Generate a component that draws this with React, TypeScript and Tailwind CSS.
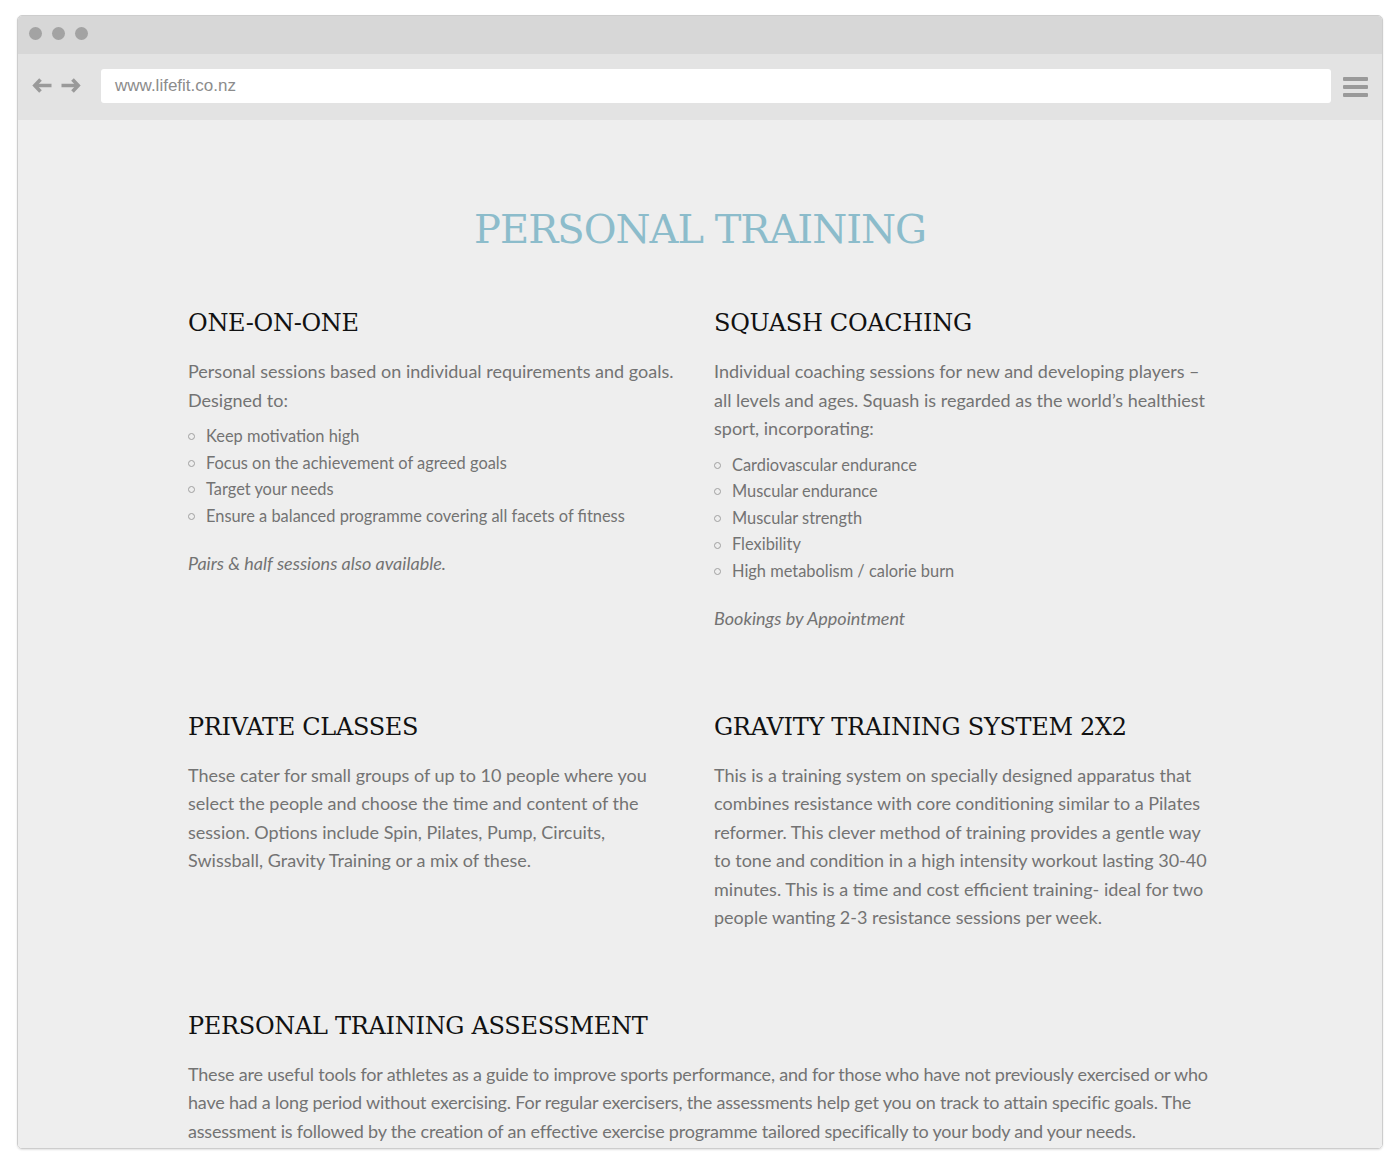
const serif = "font-['DejaVu_Serif',serif]";
const body = "font-['Lato','Noto_Sans',sans-serif]";
const para = "text-[18px] leading-[28.5px] text-[#737373]";

function Bullets({ items }: { items: string[] }) {
  return (
    <ul className="mt-[9px] flex flex-col">
      {items.map((item) => (
        <li key={item} className="flex items-center text-[16.4px] leading-[26.6px] text-[#737373]">
          <span className="mr-[11px] mt-[1px] h-[7px] w-[7px] shrink-0 rounded-full border border-[#a0a0a0]" />
          {item}
        </li>
      ))}
    </ul>
  );
}

function Heading({ children }: { children: string }) {
  return (
    <h2 className={`${serif} text-[24px] leading-[32px] tracking-[-0.3px] text-[#111]`}>{children}</h2>
  );
}

function Browser({ children }: { children: React.ReactNode }) {
  return (
    <div className="flex h-[1134px] w-[1366px] flex-col overflow-hidden rounded-[5px] border border-[#cdcdcd] shadow-[0_1px_2px_rgba(0,0,0,0.12)]">
      <div className="flex h-[38px] shrink-0 items-center gap-[10px] bg-[#d7d7d7] pb-[3px] pl-[11px]">
        <span className="h-[13px] w-[13px] rounded-full bg-[#a3a3a3]" />
        <span className="h-[13px] w-[13px] rounded-full bg-[#a3a3a3]" />
        <span className="h-[13px] w-[13px] rounded-full bg-[#a3a3a3]" />
      </div>
      <div className="flex h-[66px] shrink-0 items-center bg-[#e3e3e3] pb-[3px] pl-[14px] pr-[14px]">
        <div className="flex w-[69px] items-center gap-[9px]">
          <svg width="20" height="15" viewBox="0 0 20 15" fill="none" stroke="#9a9a9a" strokeWidth="3.6">
            <path d="M8.5 1.5 L2.8 7.5 L8.5 13.5" />
            <path d="M3 7.5 H19.5" />
          </svg>
          <svg width="20" height="15" viewBox="0 0 20 15" fill="none" stroke="#9a9a9a" strokeWidth="3.6">
            <path d="M11.5 1.5 L17.2 7.5 L11.5 13.5" />
            <path d="M17 7.5 H0.5" />
          </svg>
        </div>
        <div className="flex h-[34px] w-[1230px] items-center rounded-[3px] bg-white pl-[14px] font-['Liberation_Sans',Arial,sans-serif] text-[17px] text-[#8c8c8c]">
          www.lifefit.co.nz
        </div>
        <div className="ml-[12px] mt-[3px] flex w-[25px] flex-col gap-[4px]">
          <span className="h-[4px] rounded-[1px] bg-[#9a9a9a]" />
          <span className="h-[4px] rounded-[1px] bg-[#9a9a9a]" />
          <span className="h-[4px] rounded-[1px] bg-[#9a9a9a]" />
        </div>
      </div>
      <div className="flex-1 bg-[#eeeeee]">{children}</div>
    </div>
  );
}

export default function App() {
  return (
    <div className="min-h-[1166px] bg-white pl-[17px] pt-[15px]">
      <Browser>
        <div className={`${body} mx-auto w-[1024px] pt-[85px]`}>
          <h1 className={`${serif} text-center text-[40px] leading-[48px] tracking-[-1px] text-[#8cbccb]`}>
            PERSONAL TRAINING
          </h1>

          <div className="mt-[54px] grid grid-cols-[490px_498px] gap-x-[36px] gap-y-[78px]">
            <section>
              <Heading>ONE-ON-ONE</Heading>
              <p className={`mt-[18px] ${para}`}>
                Personal sessions based on individual requirements and goals. Designed to:
              </p>
              <Bullets
                items={[
                  "Keep motivation high",
                  "Focus on the achievement of agreed goals",
                  "Target your needs",
                  "Ensure a balanced programme covering all facets of fitness",
                ]}
              />
              <p className={`mt-[20px] italic ${para}`}>Pairs &amp; half sessions also available.</p>
            </section>

            <section>
              <Heading>SQUASH COACHING</Heading>
              <p className={`mt-[18px] ${para}`}>
                Individual coaching sessions for new and developing players – all levels and ages. Squash is
                regarded as the world’s healthiest sport, incorporating:
              </p>
              <Bullets
                items={[
                  "Cardiovascular endurance",
                  "Muscular endurance",
                  "Muscular strength",
                  "Flexibility",
                  "High metabolism / calorie burn",
                ]}
              />
              <p className={`mt-[20px] italic ${para}`}>Bookings by Appointment</p>
            </section>

            <section>
              <Heading>PRIVATE CLASSES</Heading>
              <p className={`mt-[18px] ${para}`}>
                These cater for small groups of up to 10 people where you select the people and choose the time
                and content of the session. Options include Spin, Pilates, Pump, Circuits, Swissball, Gravity
                Training or a mix of these.
              </p>
            </section>

            <section>
              <Heading>GRAVITY TRAINING SYSTEM 2X2</Heading>
              <p className={`mt-[18px] ${para}`}>
                This is a training system on specially designed apparatus that combines resistance with core
                conditioning similar to a Pilates reformer. This clever method of training provides a gentle way
                to tone and condition in a high intensity workout lasting 30-40 minutes. This is a time and cost
                efficient training- ideal for two people wanting 2-3 resistance sessions per week.
              </p>
            </section>
          </div>

          <section className="mt-[78px]">
            <Heading>PERSONAL TRAINING ASSESSMENT</Heading>
            <p className={`mt-[18px] tracking-[-0.2px] ${para}`}>
              These are useful tools for athletes as a guide to improve sports performance, and for those who have
              not previously exercised or who have had a long period without exercising. For regular exercisers,
              the assessments help get you on track to attain specific goals. The assessment is followed by the
              creation of an effective exercise programme tailored specifically to your body and your needs.
            </p>
          </section>
        </div>
      </Browser>
    </div>
  );
}
